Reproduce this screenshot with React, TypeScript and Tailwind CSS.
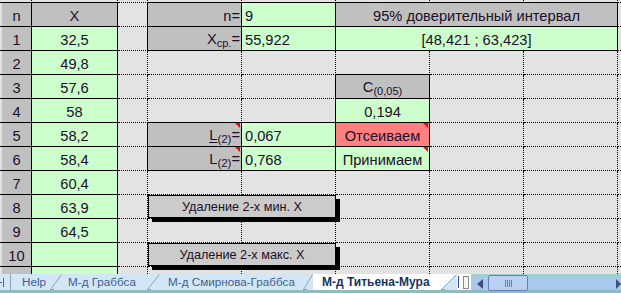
import React from "react";

const GRAY = "bg-[#e3e3e3]";
const HEAD = "bg-[#c0c0c0]";
const GREEN = "bg-[#ccffcc]";
const RED = "bg-[#ff8080]";

type Align = "left" | "center" | "right";
type CellDef = {
  span?: number;
  bg?: string;
  content?: React.ReactNode;
  align?: Align;
  flag?: boolean;
};

function isBoxed(r: number, c: number): boolean {
  if (c === 1 || c === 2) return r >= 1 && r <= 12;
  if ((c === 4 || c === 5) && (r === 1 || r === 2 || r === 6 || r === 7)) return true;
  if (c >= 6 && c <= 8 && (r === 1 || r === 2)) return true;
  if (c === 6 && r >= 4 && r <= 7) return true;
  return false;
}

const Sub = ({ children, size = "text-[11px]" }: { children: React.ReactNode; size?: string }) => (
  <span className={`${size} leading-none align-[-3px]`}>{children}</span>
);

const defs: Record<string, CellDef> = {};
const set = (r: number, c: number, d: CellDef) => {
  defs[`${r}-${c}`] = d;
};

// column A/B
const nums = ["n", "1", "2", "3", "4", "5", "6", "7", "8", "9", "10", ""];
const xs = ["X", "32,5", "49,8", "57,6", "58", "58,2", "58,4", "60,4", "63,9", "64,5", "", ""];
for (let i = 0; i < 12; i++) {
  set(i + 1, 1, { bg: HEAD, content: nums[i], align: "center" });
  set(i + 1, 2, { bg: i === 0 ? HEAD : GREEN, content: xs[i], align: "center" });
}
set(1, 4, { bg: HEAD, content: "n=", align: "right" });
set(1, 5, { bg: GREEN, content: "9", align: "left" });
set(1, 6, { span: 3, bg: HEAD, content: "95% доверительный интервал", align: "center" });
set(2, 4, {
  bg: HEAD,
  align: "right",
  content: (
    <>
      X<Sub>ср.</Sub>=
    </>
  ),
});
set(2, 5, { bg: GREEN, content: "55,922", align: "left" });
set(2, 6, { span: 3, bg: GREEN, content: "[48,421 ; 63,423]", align: "center" });
set(4, 6, {
  bg: HEAD,
  align: "center",
  content: (
    <>
      C<Sub>(0,05)</Sub>
    </>
  ),
});
set(5, 6, { bg: GREEN, content: "0,194", align: "center" });
set(6, 4, {
  bg: HEAD,
  align: "right",
  flag: true,
  content: (
    <>
      <span className="underline underline-offset-[2px]">L</span>
      <Sub size="text-[11.5px]">(2)</Sub>=
    </>
  ),
});
set(6, 5, { bg: GREEN, content: "0,067", align: "left" });
set(6, 6, { bg: RED, content: "Отсеиваем", align: "center", flag: true });
set(7, 4, {
  bg: HEAD,
  align: "right",
  flag: true,
  content: (
    <>
      L<Sub size="text-[11.5px]">(2)</Sub>=
    </>
  ),
});
set(7, 5, { bg: GREEN, content: "0,768", align: "left" });
set(7, 6, { bg: GREEN, content: "Принимаем", align: "center", flag: true });

const NROWS = 13;
const NCOLS = 10;

function Grid() {
  const cells: React.ReactNode[] = [];
  for (let r = 0; r < NROWS; r++) {
    let c = 0;
    while (c < NCOLS) {
      const d = defs[`${r}-${c}`] || {};
      const span = d.span || 1;
      const self = isBoxed(r, c);
      const lastCol = c + span - 1;
      // right border
      let right = "";
      if (lastCol < NCOLS - 1) {
        right = self || isBoxed(r, lastCol + 1) ? "border-r border-solid" : "border-r border-dotted";
      }
      let bottom = "";
      if (r < NROWS - 1) {
        let below = false;
        for (let k = c; k <= lastCol; k++) if (isBoxed(r + 1, k)) below = true;
        bottom = self || below ? "border-b-solid" : "border-b-dotted";
      }
      const bcls = [
        right,
        bottom ? "border-b" : "",
        bottom === "border-b-solid" ? "[border-bottom-style:solid]" : "",
        bottom === "border-b-dotted" ? "[border-bottom-style:dotted]" : "",
      ].join(" ");
      const alignCls =
        d.align === "center" ? "justify-center" : d.align === "right" ? "justify-end pr-[1px]" : "justify-start pl-[3px]";
      cells.push(
        <div
          key={`${r}-${c}`}
          className={`relative flex items-end pb-[1px] whitespace-nowrap overflow-visible border-black ${bcls} ${alignCls} ${d.bg || GRAY}`}
          style={span > 1 ? { gridColumn: `span ${span} / span ${span}` } : undefined}
        >
          {d.content !== undefined && d.content !== "" && <span className="leading-[17px]">{d.content}</span>}
          {d.flag && (
            <svg className="absolute top-0 right-[1px]" width="5" height="5" viewBox="0 0 5 5">
              <polygon points="0,0 5,0 5,5" fill="#ff0000" />
            </svg>
          )}
        </div>
      );
      c += span;
    }
  }
  return (
    <div className="relative">
      <div className="grid grid-cols-[2px_30px_86px_30px_94px_94px_94px_94px_94px_3px] grid-rows-[3px_repeat(11,24px)_7px] text-[14.67px] text-[#1c0f2a]">
        {cells}
      </div>
      <SheetButton top="top-[195px]" label="Удаление 2-х мин. X" />
      <SheetButton top="top-[243px]" label="Удаление 2-х макс. X" />
    </div>
  );
}

function SheetButton({ top, label }: { top: string; label: string }) {
  return (
    <div
      className={`absolute left-[148px] ${top} w-[188px] h-[23px] bg-[#cbcbcb] border border-black shadow-[4px_4px_0_#000] flex items-center justify-center text-[12.7px] text-[#1c0f2a] leading-none pt-[1px]`}
    >
      {label}
    </div>
  );
}

function Slant({ active = false, w = 12 }: { active?: boolean; w?: number }) {
  return (
    <svg width={w} height="16" viewBox={`0 0 ${w} 16`} className="shrink-0 block">
      {active && <polygon points={`0,0 ${w},0 0,16`} fill="#ffffff" />}
      <line x1="0.5" y1="15.5" x2={w - 0.5} y2="0.5" stroke="#8ea3bd" strokeWidth="1" />
      <line x1="0" y1="15.5" x2="4" y2="15.5" stroke="#8ea3bd" strokeWidth="1" />
    </svg>
  );
}

function TabBar() {
  return (
    <div className="flex flex-col h-[19px] bg-[#d3e6f6]">
      <div className="flex h-[16px] items-stretch font-['Liberation_Sans'] text-[11.7px] leading-[16px]">
        <div className="w-[11px] shrink-0 border-r border-[#8ea3bd] relative">
          <svg width="10" height="16" viewBox="0 0 10 16" className="block">
            <line x1="0" y1="8.5" x2="2" y2="8.5" stroke="#4a6590" />
            <line x1="3.5" y1="4" x2="3.5" y2="13" stroke="#4a6590" />
          </svg>
        </div>
        <div className="w-[39px] shrink-0 pl-[11px] text-[#3f5f8f]">Help</div>
        <Slant />
        <div className="w-[85px] shrink-0 pl-[6px] text-[#3f5f8f] whitespace-nowrap">М-д Граббса</div>
        <Slant w={13} />
        <div className="w-[143px] shrink-0 pl-[8px] text-[#3f5f8f] whitespace-nowrap">М-д Смирнова-Граббса</div>
        <Slant w={10} />
        <div className="w-[128px] shrink-0 pl-[9px] bg-white text-[#16335e] font-bold text-[12px] whitespace-nowrap">
          М-д Титьена-Мура
        </div>
        <Slant active w={16} />
        <div className="w-[14px] shrink-0 bg-white flex items-center gap-[4px] pl-[1px]">
          <div className="w-[1px] h-[12px] bg-[#2d4a8a]" />
          <div className="w-[6px] h-[13px] border border-[#8a8a8a] bg-[#f4f4f4]" />
        </div>
        <Scrollbar />
      </div>
      <div className="h-[3px] bg-[#8fbcbf]" />
    </div>
  );
}

function Scrollbar() {
  return (
    <div className="flex-1 relative bg-[#9fd0cf] flex items-stretch pt-[3px]">
      <div className="flex-1 flex bg-[#a8c8ee] items-center">
        <div className="w-[17px] shrink-0 flex items-center justify-center">
          <svg width="6" height="10" viewBox="0 0 6 10">
            <polygon points="6,0 6,10 0,5" fill="#3e4f7e" />
          </svg>
        </div>
        <div className="w-[40px] h-[16px] -mt-[1px] shrink-0 rounded-[2px] border border-[#6a7fb6] bg-[#b9d1f3] flex items-center justify-center gap-[1px]">
          <div className="w-[1px] h-[7px] bg-[#6d7b9c]" />
          <div className="w-[1px] h-[7px] bg-[#6d7b9c]" />
          <div className="w-[1px] h-[7px] bg-[#6d7b9c]" />
          <div className="w-[1px] h-[7px] bg-[#6d7b9c]" />
        </div>
        <div className="flex-1" />
        <div className="w-[7px] shrink-0 flex items-center justify-end">
          <svg width="5" height="10" viewBox="0 0 5 10">
            <polygon points="0,0 5,5 0,10" fill="#3e4f7e" />
          </svg>
        </div>
      </div>
    </div>
  );
}

export default function App() {
  return (
    <div className="w-[621px] h-[293px] overflow-hidden bg-[#e3e3e3] font-['Liberation_Sans',Arial,sans-serif]">
      <Grid />
      <TabBar />
    </div>
  );
}
